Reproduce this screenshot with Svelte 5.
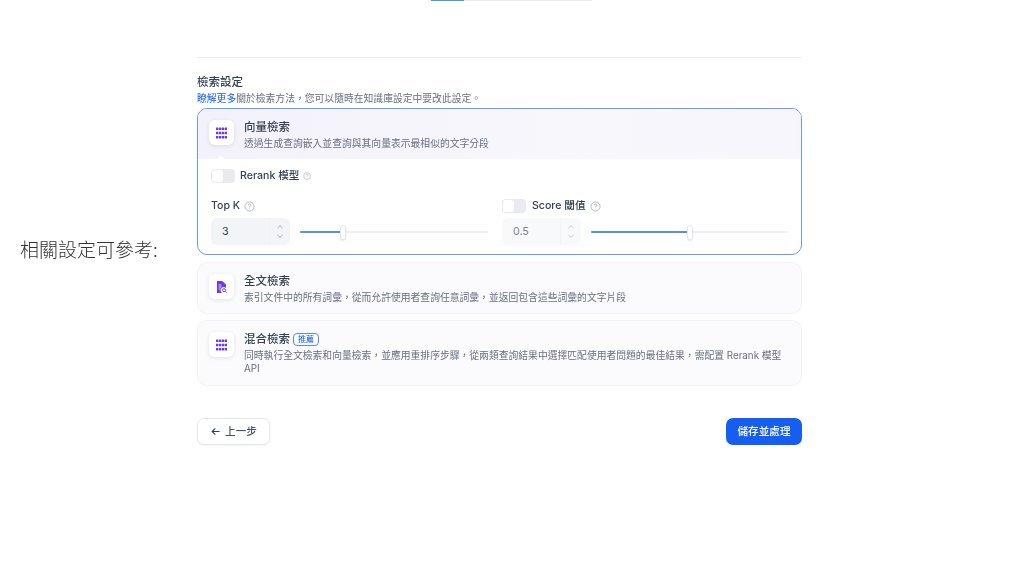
<script>
  const dots = [];
  for (let r = 0; r < 3; r++) for (let c = 0; c < 4; c++) dots.push({ x: c * 2.9, y: r * 4.2 });
</script>

{#snippet grid()}
  <svg class="glyph" viewBox="0 0 11 11" aria-hidden="true">
    {#each dots as d}
      <rect x={d.x} y={d.y} width="2.4" height="2.6" rx="0.4" fill="#6938ef" />
    {/each}
  </svg>
{/snippet}

{#snippet help(cls)}
  <svg class={cls} viewBox="0 0 12 12" aria-hidden="true">
    <circle cx="6" cy="6" r="5" fill="none" stroke="#a4abb8" stroke-width="0.9" />
    <path d="M4.6 4.7a1.4 1.4 0 1 1 2.1 1.2c-.5.3-.7.5-.7 1" fill="none" stroke="#a4abb8" stroke-width="0.9" />
    <circle cx="6" cy="8.6" r="0.5" fill="#a4abb8" />
  </svg>
{/snippet}

{#snippet spinner()}
  <div class="spin">
    <svg viewBox="0 0 8 6" aria-hidden="true"><path d="M1.5 4 4 1.6 6.5 4" fill="none" stroke="#98a2b3" stroke-width="0.9" /></svg>
    <svg viewBox="0 0 8 6" aria-hidden="true"><path d="M1.5 2 4 4.4 6.5 2" fill="none" stroke="#98a2b3" stroke-width="0.9" /></svg>
  </div>
{/snippet}

<div class="page">
  <aside class="aside"><p class="note">相關設定可參考:</p></aside>

  <main class="main">
    <div class="progress"><span class="fill"></span></div>
    <hr class="rule" />

    <h2 class="heading">檢索設定</h2>
    <p class="intro"><span class="link">瞭解更多</span>關於檢索方法&#65292;您可以隨時在知識庫設定中要改此設定。</p>

    <section class="card active">
      <header class="head">
        <div class="icon">{@render grid()}</div>
        <div class="copy">
          <div class="title">向量檢索</div>
          <div class="desc">透過生成查詢嵌入並查詢與其向量表示最相似的文字分段</div>
        </div>
        <span class="notch"></span>
      </header>
      <div class="body">
        <div class="rerank">
          <span class="toggle"><span class="knob"></span></span>
          <span class="label">Rerank 模型</span>
          {@render help("q small")}
        </div>
        <div class="params">
          <div class="param left">
            <div class="param-head">
              <span class="label">Top K</span>
              {@render help("q")}
            </div>
            <div class="param-row">
              <div class="num"><span class="val">3</span>{@render spinner()}</div>
              <div class="slider">
                <span class="track"></span>
                <span class="done" style="width: 23%"></span>
                <span class="thumb" style="left: 23%"></span>
              </div>
            </div>
          </div>
          <div class="param">
            <div class="param-head">
              <span class="toggle"><span class="knob"></span></span>
              <span class="label">Score 閾值</span>
              {@render help("q")}
            </div>
            <div class="param-row">
              <div class="num dim"><span class="val">0.5</span>{@render spinner()}</div>
              <div class="slider">
                <span class="track"></span>
                <span class="done" style="width: 50%"></span>
                <span class="thumb" style="left: 50%"></span>
              </div>
            </div>
          </div>
        </div>
      </div>
    </section>

    <section class="card plain">
      <div class="icon">
        <svg class="glyph" viewBox="0 0 11 12" aria-hidden="true">
          <path d="M1 0h5.2L10 3.6V7a3 3 0 0 0-4.3 4.6V12H1z" fill="#6938ef" />
          <path d="M2.6 4h3M2.6 6h3M2.6 8h2" stroke="#fff" stroke-width="0.8" />
          <circle cx="8" cy="9.2" r="1.5" fill="none" stroke="#6938ef" stroke-width="0.9" />
          <path d="M9.1 10.3 10.6 11.8" stroke="#6938ef" stroke-width="0.9" />
        </svg>
      </div>
      <div class="copy">
        <div class="title">全文檢索</div>
        <div class="desc">索引文件中的所有詞彙&#65292;從而允許使用者查詢任意詞彙&#65292;並返回包含這些詞彙的文字片段</div>
      </div>
    </section>

    <section class="card plain">
      <div class="icon">{@render grid()}</div>
      <div class="copy">
        <div class="title">混合檢索 <span class="badge">推薦</span></div>
        <div class="desc">同時執行全文檢索和向量檢索&#65292;並應用重排序步驟&#65292;從兩類查詢結果中選擇匹配使用者問題的最佳結果&#65292;需配置 Rerank 模型 API</div>
      </div>
    </section>

    <div class="actions">
      <button class="btn back">
        <svg viewBox="0 0 12 12" aria-hidden="true"><path d="M10.5 6H2.5M5.8 2.6 2.3 6l3.5 3.4" fill="none" stroke="#354052" stroke-width="1.2" /></svg>
        上一步
      </button>
      <button class="btn primary">儲存並處理</button>
    </div>
  </main>
</div>

<style>
  :global(body) {
    margin: 0;
    background: #fff;
  }
  .page {
    display: flex;
    width: 1024px;
    height: 576px;
    overflow: hidden;
    font-family: Inter, "Noto Sans CJK TC", sans-serif;
    color: #101828;
    filter: blur(0.3px);
  }
  .aside {
    width: 197px;
    flex: none;
    padding: 238px 0 0 20px;
    box-sizing: border-box;
  }
  .note {
    margin: 0;
    font: 300 19px/22px "Noto Sans CJK TC", sans-serif;
    color: #333;
    white-space: nowrap;
  }
  .main {
    width: 605px;
    flex: none;
  }
  .progress {
    width: 161px;
    height: 1px;
    margin-left: 234px;
    background: #eaecf0;
  }
  .fill {
    display: block;
    width: 33px;
    height: 1px;
    background: #4b9fd8;
  }
  .rule {
    height: 1px;
    margin: 56px 0 0;
    border: 0;
    background: #eaecf0;
  }
  .heading {
    margin: 16px 0 0;
    font-size: 11.5px;
    line-height: 16px;
    font-weight: 500;
    color: #354052;
  }
  .intro {
    margin: 2px 0 0;
    font-size: 9.8px;
    line-height: 14px;
    color: #676f83;
  }
  .link {
    color: #155eef;
  }
  .card {
    box-sizing: border-box;
    border-radius: 10px;
  }
  .active {
    height: 147px;
    margin-top: 2px;
    border: 1px solid #6a9bf0;
    overflow: hidden;
  }
  .head {
    position: relative;
    display: flex;
    gap: 10px;
    height: 50px;
    padding: 11px 0 0 11px;
    box-sizing: border-box;
    background: linear-gradient(90deg, #f3f2fb 0%, #f8f7fc 60%, #f7f6fc 100%);
  }
  .notch {
    position: absolute;
    left: 19px;
    bottom: 0;
    border: 4px solid transparent;
    border-top: 0;
    border-bottom: 3px solid #fff;
  }
  .icon {
    display: flex;
    align-items: center;
    justify-content: center;
    width: 25px;
    height: 25px;
    flex: none;
    border-radius: 6px;
    background: #fff;
    box-shadow: 0 1px 4px rgba(16, 24, 40, 0.1);
  }
  .glyph {
    width: 11px;
    height: 12px;
  }
  .copy {
    flex: 1;
    min-width: 0;
  }
  .title {
    font-size: 11.5px;
    line-height: 14px;
    font-weight: 500;
    color: #354052;
  }
  .desc {
    margin-top: 3px;
    font-size: 9.8px;
    line-height: 13px;
    color: #676f83;
  }
  .body {
    padding: 10px 13px 0;
  }
  .rerank {
    display: flex;
    align-items: center;
    height: 14px;
  }
  .toggle {
    display: block;
    width: 24px;
    height: 14px;
    flex: none;
    padding: 1px;
    box-sizing: border-box;
    border-radius: 4px;
    background: #e9ebf0;
  }
  .knob {
    display: block;
    width: 11px;
    height: 12px;
    border-radius: 3px;
    background: #fff;
  }
  .label {
    font-size: 10.6px;
    line-height: 14px;
    font-weight: 500;
    color: #354052;
    white-space: nowrap;
  }
  .rerank .label {
    margin-left: 5px;
  }
  .q {
    width: 11px;
    height: 11px;
    margin-left: 4px;
    flex: none;
  }
  .q.small {
    width: 8px;
    height: 8px;
    margin-left: 4px;
  }
  .params {
    display: flex;
    gap: 14px;
    margin-top: 16px;
  }
  .param {
    flex: 1;
    min-width: 0;
  }
  .param.left {
    flex: none;
    width: 277px;
  }
  .param-head {
    display: flex;
    align-items: center;
    height: 14px;
  }
  .param-head .toggle + .label {
    margin-left: 6px;
  }
  .param-row {
    display: flex;
    align-items: center;
    gap: 10px;
    margin-top: 5px;
  }
  .num {
    display: flex;
    align-items: center;
    justify-content: space-between;
    width: 79px;
    height: 27px;
    flex: none;
    box-sizing: border-box;
    border-radius: 6px;
    background: #f2f4f7;
    font-size: 10.6px;
    color: #354052;
  }
  .num.dim {
    background: #f8f9fb;
    color: #7a8394;
  }
  .val {
    padding-left: 11px;
  }
  .spin {
    display: flex;
    flex-direction: column;
    justify-content: center;
    gap: 3px;
    width: 20px;
    height: 100%;
    align-items: center;
    border-left: 1px solid #f0f1f5;
  }
  .dim .spin {
    border-left-color: #f4f5f8;
  }
  .spin svg {
    width: 8px;
    height: 6px;
  }
  .dim .spin svg {
    opacity: 0.6;
  }
  .slider {
    position: relative;
    flex: 1;
    height: 14px;
  }
  .track,
  .done {
    position: absolute;
    left: 0;
    top: 6px;
    height: 2px;
    border-radius: 1px;
  }
  .track {
    width: 100%;
    background: #eef0f3;
  }
  .done {
    background: #5b8def;
  }
  .thumb {
    position: absolute;
    top: 0;
    width: 6px;
    height: 15px;
    margin-left: -3px;
    box-sizing: border-box;
    border: 1px solid #e3e6ec;
    border-radius: 3px;
    background: #fff;
    box-shadow: 0 1px 2px rgba(16, 24, 40, 0.1);
  }
  .plain {
    display: flex;
    gap: 10px;
    margin-top: 7px;
    padding: 11px 10px 0 11px;
    border: 1px solid #f2f3f7;
    background: #fbfbfd;
    height: 52px;
  }
  .plain + .plain {
    height: 66px;
    margin-top: 6px;
  }
  .badge {
    display: inline-block;
    padding: 0 4px;
    border: 1px solid #5b8def;
    border-radius: 4px;
    font-size: 8px;
    line-height: 11px;
    font-weight: 400;
    color: #155eef;
    vertical-align: 1px;
  }
  .actions {
    display: flex;
    justify-content: space-between;
    margin-top: 32px;
  }
  .btn {
    display: flex;
    align-items: center;
    justify-content: center;
    height: 27px;
    box-sizing: border-box;
    border-radius: 7px;
    font: 500 10.6px/14px Inter, "Noto Sans CJK TC", sans-serif;
  }
  .back {
    gap: 4px;
    width: 73px;
    border: 1px solid #e3e6ec;
    background: #fff;
    color: #4a5365;
    box-shadow: 0 1px 2px rgba(16, 24, 40, 0.05);
  }
  .back svg {
    width: 11px;
    height: 11px;
  }
  .primary {
    width: 76px;
    border: 0;
    background: #155eef;
    color: #fff;
  }
</style>
